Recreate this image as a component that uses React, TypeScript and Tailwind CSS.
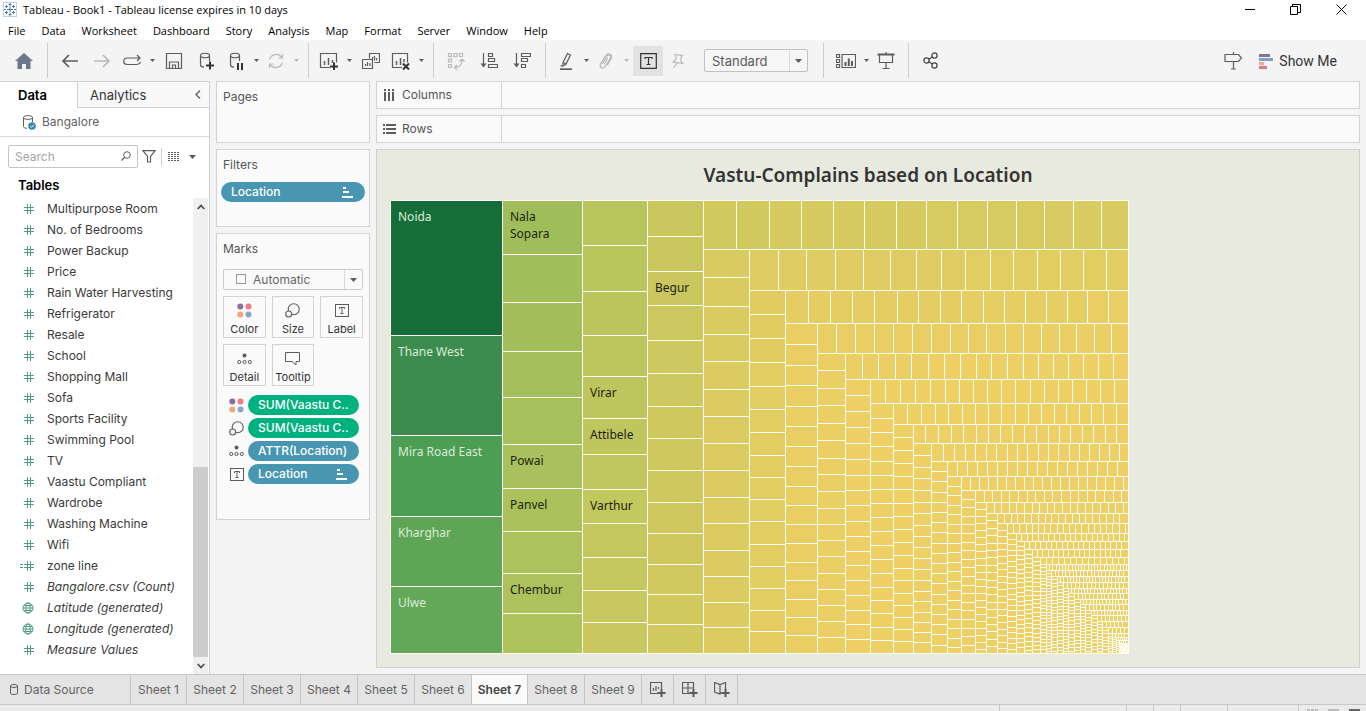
import React from "react";

type Kids = { children?: React.ReactNode };

/* ---------- small drawing helpers ---------- */

function Icon({ w = 18, h = 18, color = "#5c5c5c", sw = 1.2, children }: Kids & { w?: number; h?: number; color?: string; sw?: number }) {
  return (
    <svg width={w} height={h} viewBox={`0 0 ${w} ${h}`} fill="none" stroke={color} strokeWidth={sw} className="shrink-0" aria-hidden="true">
      {children}
    </svg>
  );
}

function Caret({ color = "#5c5c5c" }: { color?: string }) {
  return (
    <svg width="5" height="3" viewBox="0 0 5 3" aria-hidden="true">
      <path d="M0 0h5L2.5 3z" fill={color} />
    </svg>
  );
}

function Tool({ label, children, wide }: Kids & { label: string; wide?: boolean }) {
  return (
    <button type="button" aria-label={label} className={wide ? "flex h-8 w-8 shrink-0 items-center justify-center" : "flex h-8 w-7 shrink-0 items-center justify-center"}>
      {children}
    </button>
  );
}

function CaretTool({ label, color }: { label: string; color?: string }) {
  return (
    <button type="button" aria-label={label} className="flex h-8 w-3 shrink-0 items-center justify-center">
      <Caret color={color} />
    </button>
  );
}

function Sep() {
  return <span className="mx-[6px] h-[35px] w-px shrink-0 bg-[#cdcdcd]" />;
}

function Cylinder({ color = "#5c5c5c" }: { color?: string }) {
  return <path d="M3.5 3.5c0-3 9-3 9 0s-9 3-9 0v9.500c0 1.500 1.500 2 3.500 2.200M12.500 3.500v5.500" stroke={color} />;
}

function LabelGlyph({ size = 14 }: { size?: number }) {
  return (
    <svg width={size} height="13" viewBox="0 0 14 13" fill="none" stroke="#5c5c5c" aria-hidden="true">
      <rect x=".5" y=".5" width="13" height="12" />
      <path d="M4.500 5V3.500h5V5M7 3.500v6M5.500 9.500h3" />
    </svg>
  );
}

function ColorGlyph() {
  return (
    <svg width="15" height="15" viewBox="0 0 15 15" aria-hidden="true">
      <circle cx="3.300" cy="3.500" r="3" fill="#8a6f9b" />
      <circle cx="11.500" cy="3.500" r="3" fill="#ee7b85" />
      <circle cx="3.300" cy="11.500" r="3" fill="#efa67a" />
      <circle cx="11.500" cy="11.500" r="3" fill="#88a4c8" />
    </svg>
  );
}

function SizeGlyph() {
  return (
    <svg width="15" height="15" viewBox="0 0 15 15" fill="none" stroke="#5c5c5c" strokeWidth="1.100" aria-hidden="true">
      <circle cx="8.700" cy="6.200" r="5.500" />
      <circle cx="3.700" cy="11" r="3" fill="#fafafa" />
    </svg>
  );
}

function DetailGlyph() {
  return (
    <svg width="15" height="12" viewBox="0 0 15 12" fill="none" stroke="#5c5c5c" aria-hidden="true">
      <circle cx="7.500" cy="2.500" r="2" fill="#5c5c5c" stroke="none" />
      <circle cx="2.200" cy="9" r="1.600" />
      <circle cx="7.500" cy="9" r="1.600" />
      <circle cx="12.800" cy="9" r="1.600" />
    </svg>
  );
}

function SortGlyph() {
  return (
    <svg width="11" height="11" viewBox="0 0 11 11" fill="#fff" aria-hidden="true">
      <path d="M1 0h3v2H1zM1 4h6v2H1zM0 9h11v2H0z" />
    </svg>
  );
}

/* ---------- treemap ---------- */

const LEFT = 390;
const TOP = 200;
const RIGHT = 1128;
const BOTTOM = 653;

type Strip = { dir: "col" | "row"; a: number; b: number; start: number; cuts: number[]; from: string; to: string };

function evenCuts(start: number, end: number, step: number) {
  const out: number[] = [];
  for (let v = start + step; v < end - step / 2; v += step) out.push(Math.round(v));
  return out;
}

const col = (a: number, b: number, start: number, cuts: number[], from: string, to: string): Strip => ({ dir: "col", a, b, start, cuts, from, to });
const row = (a: number, b: number, start: number, cuts: number[], from: string, to: string): Strip => ({ dir: "row", a, b, start, cuts, from, to });

const strips: Strip[] = [
  col(502, 582, 200, [254, 302, 351, 397, 444, 488, 531, 573, 613], "#9fbe5b", "#b1c35d"),
  col(582, 647, 200, [245, 291, 335, 376, 418, 454, 489, 523, 557, 590, 622], "#b7c55d", "#cac85f"),
  col(647, 703, 200, [236, 271, 305, 340, 373, 406, 438, 470, 502, 533, 564, 594, 624], "#cac75f", "#d3c95f"),
  row(200, 249, 703, [736, 769, 801, 833, 864, 896, 926, 957, 987, 1016, 1044, 1073, 1101], "#d3ca5f", "#d8cb61"),
  col(703, 749, 249, [277, 306, 334, 361, 389, 416, 443, 470, 497, 523, 550, 576, 602, 627], "#dacb60", "#dccb60"),
  row(249, 290, 749, [778, 806, 835, 863, 890, 916, 941, 965, 990, 1013, 1037, 1060, 1083, 1106], "#dfcc62", "#e2cd62"),
  col(749, 785, 290, [314, 338, 362, 386, 409, 432, 455, 477, 499, 521, 544, 566, 588, 610, 631], "#e2cc61", "#e5cd62"),
  row(290, 323, 785, [808, 830, 852, 874, 897, 918, 940, 961, 983, 1004, 1025, 1046, 1067, 1087, 1108], "#e5cd63", "#e8ce63"),
  col(785, 817, 323, [344, 365, 385, 406, 426, 446, 466, 486, 505, 524, 543, 562, 580, 599, 617, 635], "#e8ce63", "#e9ce63"),
  row(323, 353, 817, [836, 855, 874, 893, 912, 931, 950, 968, 986, 1005, 1023, 1041, 1059, 1076, 1094, 1111], "#eace64", "#ebcf64"),
  col(817, 845, 353, [370, 388, 405, 423, 440, 458, 474, 491, 508, 524, 540, 556, 573, 589, 605, 621, 637], "#ebcf64", "#eccf64"),
  row(353, 379, 845, [862, 878, 895, 911, 928, 944, 960, 976, 991, 1007, 1023, 1038, 1053, 1068, 1083, 1098, 1113], "#eccf64", "#eed065"),
  col(845, 870, 379, [395, 411, 427, 443, 459, 475, 490, 505, 521, 536, 551, 565, 580, 595, 610, 624, 639], "#edcf65", "#edcf65"),
  row(379, 403, 870, [885, 900, 915, 930, 945, 959, 973, 987, 1001, 1015, 1030, 1044, 1058, 1072, 1086, 1100, 1114], "#eed065", "#efd065"),
  col(870, 893, 403, [418, 432, 446, 461, 475, 489, 503, 517, 531, 545, 559, 573, 587, 600, 613, 627, 640], "#eed065", "#eed065"),
  row(403, 424, 893, [907, 921, 935, 948, 962, 975, 988, 1001, 1015, 1028, 1041, 1054, 1066, 1079, 1091, 1103, 1116], "#efd065", "#efd065"),
  col(893, 913, 424, [437, 450, 463, 476, 489, 503, 516, 529, 542, 555, 568, 580, 593, 605, 617, 629, 641], "#efd065", "#efd065"),
  row(424, 443, 913, [925, 938, 951, 963, 976, 988, 1000, 1012, 1024, 1036, 1048, 1059, 1070, 1082, 1093, 1105, 1116], "#efd066", "#efd066"),
  col(913, 931, 443, [455, 467, 478, 490, 502, 513, 525, 536, 547, 558, 569, 580, 591, 601, 612, 622, 632, 642], "#efd066", "#efd066"),
  row(443, 461, 931, [943, 954, 965, 975, 986, 996, 1007, 1017, 1027, 1038, 1048, 1058, 1069, 1079, 1089, 1099, 1109, 1119], "#efd066", "#efd066"),
];

/* The long tail: alternating narrow columns and rows that shrink towards the corner. */
const tailX = [931, 947, 961, 975, 986, 997, 1007, 1016, 1024, 1032, 1040, 1046, 1051, 1057, 1063, 1068, 1074, 1080, 1085, 1091, 1097, 1102, 1108, 1112, 1116, 1119];
const tailY = [461, 476, 490, 502, 513, 523, 533, 541, 549, 557, 564, 570, 576, 582, 588, 593, 599, 604, 610, 615, 621, 627, 633, 637, 640, 643];
const colStep = [10.2, 9.5, 8.6, 7, 7.4, 6.6, 5.5, 4.6, 4.6, 4.2, 3.4, 3, 3.4, 3.4, 3, 3.4, 3.4, 3, 3.4, 3.4, 3, 3.2, 2.5, 2, 2];
const rowStep = [10, 9, 8.6, 7.6, 6.8, 6.2, 5.4, 5.4, 5.2, 6, 3.2, 3.6, 3.2, 4, 3.2, 3.8, 3.2, 3.8, 3.2, 4, 4, 4, 3, 2, 2];

for (let i = 0; i < colStep.length; i++) {
  strips.push(col(tailX[i], tailX[i + 1], tailY[i], evenCuts(tailY[i], BOTTOM, colStep[i]), "#efd066", "#efd066"));
  strips.push(row(tailY[i], tailY[i + 1], tailX[i + 1], evenCuts(tailX[i + 1], RIGHT, rowStep[i]), "#efd066", "#efd066"));
}

/* The smallest marks are single dots in the corner. */
const specks = [[1121, 645], [1124, 646], [1119, 648], [1126, 648], [1122, 649], [1120, 651], [1125, 651], [1127, 644]];

function mix(from: string, to: string, t: number) {
  const part = (s: string, i: number) => parseInt(s.slice(i, i + 2), 16);
  const c = [1, 3, 5].map((i) => Math.round(part(from, i) + (part(to, i) - part(from, i)) * t));
  return `rgb(${c.join(",")})`;
}

const leaders = [
  { y: 200, end: 335, fill: "#156d37", name: "Noida" },
  { y: 335, end: 435, fill: "#3c8c4f", name: "Thane West" },
  { y: 435, end: 516, fill: "#4b9e53", name: "Mira Road East" },
  { y: 516, end: 586, fill: "#5ea656", name: "Kharghar" },
  { y: 586, end: 653, fill: "#62a858", name: "Ulwe" },
];

const names = [
  { x: 510, y: 221, t: "Nala" },
  { x: 510, y: 238, t: "Sopara" },
  { x: 510, y: 465, t: "Powai" },
  { x: 510, y: 509, t: "Panvel" },
  { x: 510, y: 594, t: "Chembur" },
  { x: 590, y: 397, t: "Virar" },
  { x: 590, y: 439, t: "Attibele" },
  { x: 590, y: 510, t: "Varthur" },
  { x: 655, y: 292, t: "Begur" },
];

function Treemap() {
  return (
    <svg width="739" height="454" viewBox="390 200 739 454" className="block shrink-0 font-['Noto_Sans',sans-serif] text-[12px]" role="img" aria-label="Treemap of complaints by location">
      <rect x={LEFT} y={TOP} width={RIGHT - LEFT + 1} height={BOTTOM - TOP + 1} fill="#fffef4" />
      <g shapeRendering="crispEdges">
        {leaders.map((l) => (
          <rect key={l.name} x={LEFT + 1} y={l.y + 1} width={111} height={l.end - l.y - 1} fill={l.fill} />
        ))}
        {strips.map((s, i) => {
          const edges = [s.start, ...s.cuts, s.dir === "col" ? BOTTOM : RIGHT];
          return edges.slice(1).map((e, k) => {
            const long = Math.max(0, e - edges[k] - 1);
            const wide = Math.max(0, s.b - s.a - 1);
            const fill = mix(s.from, s.to, k / (edges.length - 1));
            return s.dir === "col" ? (
              <rect key={`${i}-${k}`} x={s.a + 1} y={edges[k] + 1} width={wide} height={long} fill={fill} />
            ) : (
              <rect key={`${i}-${k}`} x={edges[k] + 1} y={s.a + 1} width={long} height={wide} fill={fill} />
            );
          });
        })}
        {specks.map(([x, y]) => (
          <rect key={`${x}-${y}`} x={x} y={y} width="1" height="1" fill="#f3dc8c" />
        ))}
      </g>
      {leaders.map((l) => (
        <text key={l.name} x="398" y={l.y + 21} fill="#dcecd8">{l.name}</text>
      ))}
      {names.map((n) => (
        <text key={n.t} x={n.x} y={n.y} fill="#1f1f12">{n.t}</text>
      ))}
    </svg>
  );
}

/* ---------- page parts ---------- */

const menus = ["File", "Data", "Worksheet", "Dashboard", "Story", "Analysis", "Map", "Format", "Server", "Window", "Help"];

function TitleBar() {
  return (
    <header className="bg-white font-['Open_Sans',sans-serif] text-[11px] text-black">
      <div className="flex h-[19px] items-center pl-[3px]">
        <svg width="14" height="15" viewBox="0 0 14 15" stroke="#4a7fa5" fill="none" aria-hidden="true">
          <rect x=".5" y=".5" width="13" height="14" stroke="#c3d3dd" />
          <path d="M7 4.500v6M4 7.500h6M7 1v3M5.500 2.500h3M7 11v3M5.500 12.500h3M1 7.500h2M11 7.500h2M3.500 3v3M2 4.500h3M10.500 3v3M9 4.500h3M3.500 9v3M2 10.500h3M10.500 9v3M9 10.500h3" />
        </svg>
        <h1 className="ml-[6px] leading-4">Tableau - Book1 - Tableau license expires in 10 days</h1>
        <div className="ml-auto flex h-4 items-center pr-[2px]">
          <button type="button" aria-label="Minimize" className="flex w-[46px] justify-center">
            <svg width="10" height="10" viewBox="0 0 10 10"><path d="M0 4.500h10" stroke="#000" /></svg>
          </button>
          <button type="button" aria-label="Restore" className="flex w-[45px] justify-center">
            <svg width="11" height="11" viewBox="0 0 11 11" fill="none" stroke="#000"><path d="M.5 2.500h7v8h-7zM2.500 2.500v-2h8v8h-3" /></svg>
          </button>
          <button type="button" aria-label="Close" className="flex w-[46px] justify-center">
            <svg width="11" height="11" viewBox="0 0 11 11" stroke="#000"><path d="M.5.5l10 10M10.500.5l-10 10" /></svg>
          </button>
        </div>
      </div>
      <nav className="flex h-[21px] items-center gap-4 pl-2 pt-[2px]">
        {menus.map((m) => (
          <button key={m} type="button" className="leading-4">{m}</button>
        ))}
      </nav>
    </header>
  );
}

const faint = "#b9b9b9";

function Toolbar() {
  return (
    <div className="flex h-[41px] shrink-0 items-center bg-[#f4f4f4]" role="toolbar" aria-label="Main toolbar">
      <button type="button" aria-label="Start page" className="ml-[6px] flex h-8 w-[35px] items-center justify-center">
        <svg width="18" height="16" viewBox="0 0 18 16" fill="#6b788c" aria-hidden="true"><path d="M9 0l9 8h-2.500v8H11v-5H7v5H2.500V8H0z" /></svg>
      </button>
      <Sep />
      <Tool label="Back" wide><Icon sw={1.7}><path d="M17 9H2M8 3L2 9l6 6" /></Icon></Tool>
      <Tool label="Forward" wide><Icon sw={1.7} color={faint}><path d="M1 9h15M10 3l6 6-6 6" /></Icon></Tool>
      <Tool label="Replay"><Icon w={19}><path d="M5 12.500H4a3 3 0 010-6.500h13M14 3l3 3-3 3M10 12.500h4a4 3.500 0 003.500-2.500M5 12.500h6" /></Icon></Tool>
      <CaretTool label="Replay options" />
      <Tool label="Save" wide><Icon><path d="M1.500 1.500h15v15h-15zM4.500 16v-6h9v6M7.500 16v-3h3v3" /></Icon></Tool>
      <Tool label="New data source" wide><Icon><Cylinder /><path d="M13 9.500v8M9 13.500h8" stroke="#333" strokeWidth="2" /></Icon></Tool>
      <Tool label="Pause updates"><Icon><Cylinder /><path d="M11 11v7M15 11v7" stroke="#333" strokeWidth="2" /></Icon></Tool>
      <CaretTool label="Pause options" />
      <Tool label="Refresh"><Icon color={faint}><path d="M2.500 7.500A7 7 0 0115 5.500M15.500 10.500A7 7 0 013 12.500M15.500 2v4h-4M2.500 16v-4h4" /></Icon></Tool>
      <CaretTool label="Refresh options" color={faint} />
      <Sep />
      <Tool label="New worksheet"><Icon w={20}><path d="M11 15.500H1.500v-14h16v9" /><path d="M5.500 9v4M9.500 6v7M13.500 8v3" strokeWidth="1.500" /><path d="M15 10.500v8M11 14.500h8" stroke="#333" strokeWidth="2" /></Icon></Tool>
      <CaretTool label="New worksheet options" />
      <Tool label="Duplicate" wide><Icon><path d="M7.500 6.500v-5h10v9h-5M.5 7.500h10v9H.5zM3.500 14v-2M5.500 14v-4M8 14v-3M10.500 7V5M12.500 8.500V4M14.500 8.500V6" /></Icon></Tool>
      <Tool label="Clear sheet"><Icon w={20}><path d="M11 15.500H1.500v-14h15v9" /><path d="M5.500 9v4M9.500 6v7M13 7v3" strokeWidth="1.500" /><path d="M12 11.500l6 6M18 11.500l-6 6" stroke="#333" strokeWidth="2" /></Icon></Tool>
      <CaretTool label="Clear options" />
      <Sep />
      <div className="flex gap-px pr-px">
        <Tool label="Swap rows and columns" wide><Icon color={faint}><path d="M1.500 1.500h3v3h-3zM7 1.500h3v3H7zM12.500 1.500h3v3h-3zM1.500 7h3v3h-3zM1.500 12.500h3v3h-3zM8 15.500c5 0 7-3 7-8M12.500 9.500L15 7l2.500 2.500M10 13l-2.500 2.500L10 18" /></Icon></Tool>
        <Tool label="Sort ascending" wide><Icon><path d="M3.500 1v13" /><path d="M.5 11.500h6l-3 4z" fill="#5c5c5c" stroke="none" /><path d="M8.500 1.500h4v3h-4zM8.500 6.500h6v3h-6zM8.500 12.500h9v3h-9z" /></Icon></Tool>
        <Tool label="Sort descending" wide><Icon><path d="M3.500 1v13" /><path d="M.5 11.500h6l-3 4z" fill="#5c5c5c" stroke="none" /><path d="M8.500 1.500h9v3h-9zM8.500 6.500h6v3h-6zM8.500 12.500h4v3h-4z" /></Icon></Tool>
      </div>
      <Sep />
      <Tool label="Highlight"><Icon><path d="M6 10.500l4.500-9 3 1.500L9 12l-3 2zM6 10.500L9 12" /><path d="M3.500 14h2" /><path d="M3 17.200h12" strokeWidth="1.700" /></Icon></Tool>
      <CaretTool label="Highlight options" />
      <Tool label="Group members"><Icon color={faint}><path d="M5 12l5-8c1.500-2 4.500-.5 3.500 2l-5.500 9c-2 2.500-6 .5-4.500-3l5-8c2-3.500 7-2.500 6 2l-4 7M7 12.500l4-6.500" /></Icon></Tool>
      <CaretTool label="Group options" color={faint} />
      <button type="button" aria-label="Show mark labels" aria-pressed="true" className="ml-px flex h-[30px] w-[30px] shrink-0 items-center justify-center bg-[#e2e2e2]">
        <Icon color="#333" w={17} h={16}><path d="M.7.7h15.600v14.600H.7zM5 6V4.500h7V6M8.500 4.500v7M6.500 11.500h4" /></Icon>
      </button>
      <Tool label="Fix axes"><Icon color={faint} w={16} h={18}><path d="M6 2.500l7.500 1-1.500 2 0 4 2 2-10-1.500 2.500-2L7 5zM8 11l-3.500 5" /></Icon></Tool>
      <div className="relative ml-[13px] mr-[9px] shrink-0">
        <select aria-label="Fit" className="block h-[23px] w-[104px] appearance-none rounded-[2px] border border-[#c2c2c2] bg-[#f6f6f6] pl-[7px] text-[13px] leading-5 text-[#5a5a5a]">
          <option>Standard</option>
        </select>
        <span className="pointer-events-none absolute inset-y-px right-px flex w-[18px] items-center justify-center border-l border-[#d9d9d9]">
          <svg width="7" height="4" viewBox="0 0 7 4" aria-hidden="true"><path d="M0 0h7L3.500 4z" fill="#5c5c5c" /></svg>
        </span>
      </div>
      <Sep />
      <Tool label="Show or hide cards" wide><Icon w={20} h={16}><path d="M.5 1.500h3v3h-3zM.5 6.500h3v3h-3zM.5 11.500h3v3h-3zM6 1.500h13.500v13H6z" /><path d="M9.500 9v4M12.800 5.500V13M16 8v5" strokeWidth="2" /></Icon></Tool>
      <button type="button" aria-label="Card options" className="flex h-8 w-2 shrink-0 items-center justify-center"><Caret /></button>
      <Tool label="Presentation mode" wide><Icon><path d="M.5 2.500h17" strokeWidth="2" /><path d="M2.500 3v7.500h13V3M9 0v2M9 10.500v6M5.500 16.500h7" /></Icon></Tool>
      <Sep />
      <Tool label="Share" wide><Icon w={16} h={17} color="#444"><circle cx="3.500" cy="8.500" r="2.600" /><circle cx="11.500" cy="3.500" r="2.600" /><circle cx="11.500" cy="13.500" r="2.600" /><path d="M5.800 7.200l3.500-2.300M5.800 9.800l3.500 2.300" /></Icon></Tool>
      <div className="ml-auto flex items-center gap-[12px] pr-[29px]">
        <Tool label="Guide"><Icon w={19} h={19}><path d="M1 3.500h13.500l3 3.500-3 3.500H1zM9.500 1v2.500M9.500 10.500v7.500M7 18h5" /></Icon></Tool>
        <button type="button" className="flex items-center gap-[6px] font-['Roboto',sans-serif] text-[14px] leading-5 text-[#333]">
          <svg width="14" height="16" viewBox="0 0 14 16" aria-hidden="true">
            <path d="M0 1h11v3H0z" fill="#85719a" /><path d="M0 5h14v3H0z" fill="#7ba3c4" /><path d="M0 9h5v3H0z" fill="#efa98a" /><path d="M0 13h8v3H0z" fill="#e27586" />
          </svg>
          Show Me
        </button>
      </div>
    </div>
  );
}

type Field = { name: string; kind: "num" | "calc" | "geo"; gen?: boolean };
const fields: Field[] = [
  ...["Multipurpose Room", "No. of Bedrooms", "Power Backup", "Price", "Rain Water Harvesting", "Refrigerator", "Resale", "School", "Shopping Mall", "Sofa", "Sports Facility", "Swimming Pool", "TV", "Vaastu Compliant", "Wardrobe", "Washing Machine", "Wifi"].map((name): Field => ({ name, kind: "num" })),
  { name: "zone line", kind: "calc" },
  { name: "Bangalore.csv (Count)", kind: "num", gen: true },
  { name: "Latitude (generated)", kind: "geo", gen: true },
  { name: "Longitude (generated)", kind: "geo", gen: true },
  { name: "Measure Values", kind: "num", gen: true },
];

function FieldGlyph({ kind }: { kind: Field["kind"] }) {
  return (
    <svg width="16" height="12" viewBox="0 0 16 12" fill="none" stroke="#4f9c87" aria-hidden="true">
      {kind === "geo" ? (
        <g>
          <circle cx="9" cy="6" r="5" />
          <ellipse cx="9" cy="6" rx="2.200" ry="5" />
          <path d="M4 6h10M5 3.500h8M5 8.500h8" />
        </g>
      ) : (
        <path d="M5 4.500h10M5 7.500h10M8.500 1v10M11.500 1v10" />
      )}
      {kind === "calc" && <path d="M1 4.500h3M1 7.500h3" />}
    </svg>
  );
}

function DataPane() {
  return (
    <aside className="flex w-[210px] shrink-0 flex-col border-r border-t border-[#d0d0d0] bg-white">
      <div className="flex h-[26px] shrink-0" role="tablist">
        <button type="button" role="tab" aria-selected="true" className="w-[77px] pr-[12px] text-[13px] font-semibold leading-5 text-black">Data</button>
        <button type="button" role="tab" aria-selected="false" className="flex-1 border-b border-l border-[#d0d0d0] bg-[#f9f9f9] pl-3 text-left text-[13px] leading-5 text-[#333]">Analytics</button>
        <button type="button" aria-label="Collapse pane" className="flex w-[22px] items-center justify-center border-b border-[#d0d0d0] bg-[#f9f9f9]">
          <svg width="6" height="9" viewBox="0 0 6 9" fill="none" stroke="#5c5c5c" strokeWidth="1.300"><path d="M5 .5l-4 4 4 4" /></svg>
        </button>
      </div>
      <button type="button" className="flex h-[29px] shrink-0 items-center gap-[6px] border-b border-[#dcdcdc] pl-[21px] text-[12px] leading-4 text-[#5f5f5f]">
        <svg width="15" height="15" viewBox="0 0 15 15" fill="none" stroke="#5c5c5c" aria-hidden="true">
          <path d="M2.500 2.500c0-2.500 9-2.500 9 0s-9 2.500-9 0v9c0 1.200 1.500 1.700 3.500 1.800M11.500 2.500V7" />
          <circle cx="11" cy="11" r="3.800" fill="#3d86ab" stroke="none" />
          <path d="M9.200 11l1.300 1.300 2.300-2.500" stroke="#fff" />
        </svg>
        Bangalore
      </button>
      <div className="flex h-[39px] shrink-0 items-center pl-2">
        <div className="relative">
          <input type="text" aria-label="Search fields" placeholder="Search" className="block h-[23px] w-[130px] rounded-[2px] border border-[#c4c4c4] bg-white pl-[6px] text-[12px] leading-4 placeholder:text-[#a5a5a5]" />
          <svg width="10" height="10" viewBox="0 0 10 10" fill="none" stroke="#5c5c5c" className="pointer-events-none absolute right-[7px] top-[6px]" aria-hidden="true"><circle cx="6" cy="4" r="3.300" /><path d="M3.500 6.500L.5 9.500" strokeWidth="1.300" /></svg>
        </div>
        <button type="button" aria-label="Filter fields" className="ml-[3px] flex w-[15px] justify-center"><Icon w={14} h={13}><path d="M1 .7h12L8.500 6.500v5.500h-3V6.500z" /></Icon></button>
        <span className="ml-[5px] h-[18px] w-px bg-[#cfcfcf]" />
        <button type="button" aria-label="View options" className="ml-[6px] flex items-center gap-[9px]">
          <svg width="12" height="9" viewBox="0 0 12 9" stroke="#5c5c5c" strokeDasharray="2 1" aria-hidden="true"><path d="M0 .5h12M0 2.500h12M0 4.500h12M0 6.500h12M0 8.500h12" /></svg>
          <svg width="7" height="4" viewBox="0 0 7 4" aria-hidden="true"><path d="M0 0h7L3.500 4z" fill="#5c5c5c" /></svg>
        </button>
      </div>
      <h2 className="h-[22px] shrink-0 pl-[18px] pt-px text-[13px] font-semibold leading-4 text-black">Tables</h2>
      <div className="flex min-h-0 flex-1">
        <ul className="min-w-0 flex-1 overflow-hidden">
          {fields.map((f) => (
            <li key={f.name} className="flex h-[21px] items-center gap-[12px] whitespace-nowrap pl-[19px] text-[12px] leading-4 text-[#3a3a3a]">
              <FieldGlyph kind={f.kind} />
              <span className={f.gen ? "italic" : ""}>{f.name}</span>
            </li>
          ))}
        </ul>
        <div className="mr-px flex w-[15px] flex-col bg-[#f0f0f0]">
          <span className="flex h-[18px] items-center justify-center"><svg width="8" height="6" viewBox="0 0 8 6" fill="none" stroke="#4d4d4d" strokeWidth="1.800"><path d="M.7 5L4 1.500 7.300 5" /></svg></span>
          <span className="flex-1" />
          <span className="h-[190px] bg-[#cdcdcd]" />
          <span className="flex h-[17px] items-center justify-center"><svg width="8" height="6" viewBox="0 0 8 6" fill="none" stroke="#4d4d4d" strokeWidth="1.800"><path d="M.7 1L4 4.500 7.300 1" /></svg></span>
        </div>
      </div>
    </aside>
  );
}

const cards = "border border-[#d3d3d3] bg-[#fafafa]";
const cardTitle = "text-[12px] leading-4 text-[#555]";

const markButtons = [
  { name: "Color", glyph: <ColorGlyph /> },
  { name: "Size", glyph: <SizeGlyph /> },
  { name: "Label", glyph: <LabelGlyph /> },
  { name: "Detail", glyph: <DetailGlyph /> },
  { name: "Tooltip", glyph: <svg width="15" height="14" viewBox="0 0 15 14" fill="none" stroke="#5c5c5c" aria-hidden="true"><path d="M.5.5h14v9H11v3.500L7 9.500H.5z" /></svg> },
];

const marks = [
  { text: "SUM(Vaastu C..", green: true, glyph: <ColorGlyph /> },
  { text: "SUM(Vaastu C..", green: true, glyph: <SizeGlyph /> },
  { text: "ATTR(Location)", glyph: <DetailGlyph /> },
  { text: "Location", sort: true, glyph: <LabelGlyph /> },
];

function Shelves() {
  return (
    <div className="flex w-[154px] shrink-0 flex-col gap-[6px]">
      <section className={`${cards} h-[62px] px-[6px] pt-[7px]`}><h2 className={cardTitle}>Pages</h2></section>
      <section className={`${cards} h-[78px] px-1 pt-[7px]`}>
        <h2 className={`${cardTitle} pl-[2px]`}>Filters</h2>
        <button type="button" className="mt-[9px] flex h-5 w-full items-center justify-between rounded-full bg-[#4996b2] pl-[10px] pr-3 text-[12px] font-medium leading-4 text-white">Location<SortGlyph /></button>
      </section>
      <section className={`${cards} h-[287px] px-[6px] pt-[7px]`}>
        <h2 className={cardTitle}>Marks</h2>
        <div className="relative mt-3">
          <select aria-label="Mark type" className="block h-[21px] w-full appearance-none rounded-[2px] border border-[#cacaca] bg-[#fafafa] pl-[29px] text-[12px] leading-4 text-[#666]"><option>Automatic</option></select>
          <span className="pointer-events-none absolute left-[13px] top-[5px] h-[10px] w-[10px] border border-[#999]" />
          <span className="pointer-events-none absolute inset-y-px right-px flex w-[18px] items-center justify-center border-l border-[#d9d9d9]"><svg width="7" height="4" viewBox="0 0 7 4" aria-hidden="true"><path d="M0 0h7L3.500 4z" fill="#5c5c5c" /></svg></span>
        </div>
        <div className="mt-[6px] grid grid-cols-3 gap-[6px]">
          {markButtons.map((b) => (
            <button key={b.name} type="button" className="flex h-[42px] flex-col items-center border border-[#d3d3d3] text-[11px] leading-4 text-[#333]">
              <span className="flex h-[25px] items-center pt-[3px]">{b.glyph}</span>
              {b.name}
            </button>
          ))}
        </div>
        <div className="mt-[9px] flex flex-col gap-[3px] pl-[6px] pr-[4px]">
          {marks.map((m, i) => (
            <div key={i} className="flex items-center gap-1">
              <span className="flex w-[15px] justify-center">{m.glyph}</span>
              <button type="button" className={m.green ? "flex h-5 flex-1 items-center justify-between whitespace-nowrap rounded-full bg-[#00b180] pl-[10px] text-[12px] font-medium leading-4 text-white" : "flex h-5 flex-1 items-center justify-between whitespace-nowrap rounded-full bg-[#4996b2] pl-[10px] text-[12px] font-medium leading-4 text-white"}>
                {m.text}
                {m.sort && <span className="pr-3"><SortGlyph /></span>}
              </button>
            </div>
          ))}
        </div>
      </section>
    </div>
  );
}

function Shelf({ name, children }: Kids & { name: string }) {
  return (
    <section className={`${cards} flex h-[28px] shrink-0`}>
      <h2 className="flex w-[125px] items-center gap-[6px] border-r border-[#d3d3d3] pl-[6px] text-[12px] leading-4 text-[#555]">{children}{name}</h2>
    </section>
  );
}

function View() {
  return (
    <main className="flex min-w-0 flex-1 flex-col gap-[6px]">
      <Shelf name="Columns"><svg width="13" height="12" viewBox="0 0 13 12" fill="#5c5c5c" aria-hidden="true"><path d="M1 0h2v2H1zM1 3h2v9H1zM5 0h2v2H5zM5 3h2v9H5zM9 0h2v2H9zM9 3h2v9H9z" /></svg></Shelf>
      <Shelf name="Rows"><svg width="13" height="10" viewBox="0 0 13 10" fill="#5c5c5c" aria-hidden="true"><path d="M0 0h2v2H0zM3 0h10v2H3zM0 4h2v2H0zM3 4h10v2H3zM0 8h2v2H0zM3 8h10v2H3z" /></svg></Shelf>
      <section className="flex min-h-0 flex-1 flex-col border border-[#d0d0ce] bg-[#e8eadf]">
        <h2 className="flex h-[50px] shrink-0 items-center justify-center font-['Noto_Sans',sans-serif] text-[19px] font-semibold leading-6 text-[#333]">Vastu-Complains based on Location</h2>
        <div className="pl-[13px]"><Treemap /></div>
      </section>
    </main>
  );
}

function SheetTabs() {
  const tab = "flex items-center justify-center border-r border-[#c6c6c6] whitespace-nowrap";
  return (
    <footer className="shrink-0">
      <div className="flex h-[31px] border-y border-[#c6c6c6] bg-[#e4e4e4] text-[12px] leading-4 text-[#636363]">
        <button type="button" className="flex w-[131px] items-center gap-[6px] border-r border-[#c6c6c6] pl-[10px]">
          <svg width="8" height="11" viewBox="0 0 8 11" fill="none" stroke="#5c5c5c" aria-hidden="true"><path d="M.5 2c0-2 7-2 7 0s-7 2-7 0v7c0 2 7 2 7 0V2" /></svg>
          Data Source
        </button>
        {[1, 2, 3, 4, 5, 6, 7, 8, 9].map((n) => (
          <button key={n} type="button" className={n === 7 ? `${tab} w-[56px] bg-[#fafafa] font-semibold text-[#444]` : n === 1 ? `${tab} w-[56px]` : `${tab} w-[57px]`}>Sheet {n}</button>
        ))}
        <button type="button" aria-label="New worksheet tab" className="flex w-8 items-center justify-center border-r border-[#c6c6c6]"><Icon w={16} h={15}><path d="M8 11.500H.5V.5h11V7M3.500 9V6M6 9V4M8.500 7V5" /><path d="M11.500 7v8M7.500 11h8" strokeWidth="2" /></Icon></button>
        <button type="button" aria-label="New dashboard tab" className="flex w-8 items-center justify-center border-r border-[#c6c6c6]"><Icon w={16} h={15}><path d="M8 11.500H.5V.5h11V7M.5 6h11M6 .5v11" /><path d="M11.500 7v8M7.500 11h8" strokeWidth="2" /></Icon></button>
        <button type="button" aria-label="New story tab" className="flex w-8 items-center justify-center border-r border-[#c6c6c6]"><Icon w={16} h={15}><path d="M8 10.500l-2 1.500-5.500-2V.5L6 2.500l5.500-2V7M6 2.500V12" /><path d="M11.500 7v8M7.500 11h8" strokeWidth="2" /></Icon></button>
      </div>
      <div className="flex h-[6px] justify-end bg-[#ebebeb]">
        <span className="w-[127px] border-l border-[#c6c6c6]" />
        <span className="w-[27px] border-l border-[#c6c6c6]" />
        <span className="w-[27px] border-l border-[#c6c6c6]" />
        <span className="w-[47px] border-l border-[#c6c6c6]" />
        <span className="w-[71px] border-l border-[#c6c6c6]" />
        <div className="flex w-[68px] items-end gap-[10px] border-l border-[#c6c6c6] pl-2">
          <span className="flex gap-px"><i className="h-[2px] w-[3px] bg-[#bbb]" /><i className="h-[2px] w-[3px] bg-[#bbb]" /><i className="h-[2px] w-[3px] bg-[#bbb]" /></span>
          <span className="h-[2px] w-[11px] bg-[#bbb]" />
          <span className="h-[2px] w-[11px] bg-[#666]" />
        </div>
      </div>
    </footer>
  );
}

export default function App() {
  return (
    <div className="flex h-screen flex-col overflow-hidden bg-[#f4f4f4] font-['Inter',sans-serif]">
      <TitleBar />
      <Toolbar />
      <div className="flex min-h-0 flex-1">
        <DataPane />
        <div className="flex min-w-0 flex-1 gap-[6px] pb-[6px] pl-[6px] pr-[6px]">
          <Shelves />
          <View />
        </div>
      </div>
      <SheetTabs />
    </div>
  );
}
